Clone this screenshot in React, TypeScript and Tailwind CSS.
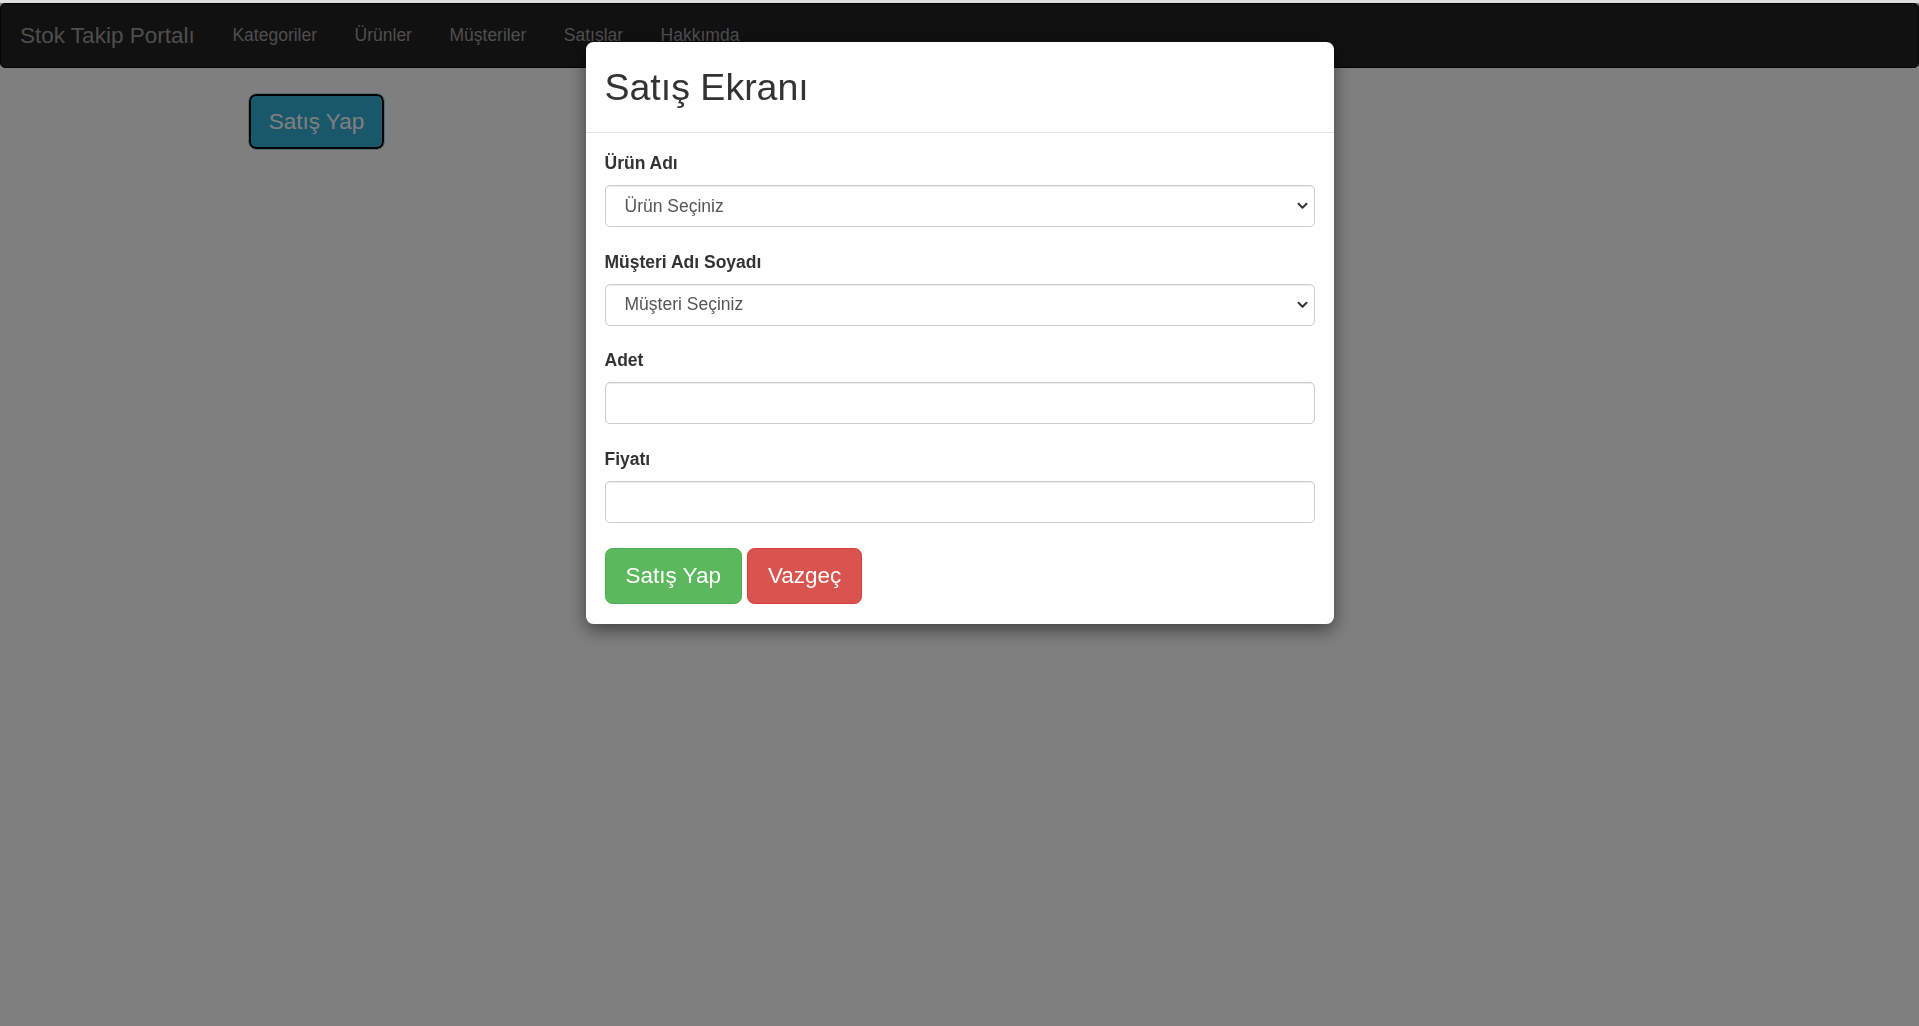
import React from 'react';

const navLinks = ['Kategoriler', 'Ürünler', 'Müşteriler', 'Satışlar', 'Hakkımda'];

const Chevron: React.FC = () => (
  <svg
    className="pointer-events-none absolute right-[7px] top-1/2 -translate-y-1/2"
    width="11"
    height="8"
    viewBox="0 0 11 8"
    fill="none"
  >
    <path d="M1.5 1.8 L5.5 5.8 L9.5 1.8" stroke="#333" strokeWidth="2" strokeLinecap="round" strokeLinejoin="round" />
  </svg>
);

const FormGroup: React.FC<{ label: string; children: React.ReactNode }> = ({ label, children }) => (
  <div className="mb-[22.5px]">
    <label className="block h-[25px] leading-[25px] mb-[9px] text-[17.5px] font-bold text-[#333]">{label}</label>
    {children}
  </div>
);

const inputCls =
  'block w-full h-[42px] rounded-[5px] border border-[#ccc] bg-white text-[17.5px] text-[#555] shadow-[inset_0_1px_1px_rgba(0,0,0,0.075)] outline-none';

const App: React.FC = () => {
  return (
    <div className="relative min-h-screen bg-white font-['Liberation_Sans',Arial,sans-serif]">
      {/* Page */}
      <div className="pt-[3px]">
        <nav className="flex h-[65px] items-center rounded-[5px] border border-[#080808] bg-[#222]">
          <span className="px-[19px] text-[22.5px] text-[#9d9d9d]">Stok Takip Portalı</span>
          <ul className="flex">
            {navLinks.map((l) => (
              <li key={l} className="px-[18.75px] text-[17.5px] text-[#9d9d9d]">
                {l}
              </li>
            ))}
          </ul>
        </nav>
        <div className="pl-[249px] pt-[26px]">
          <button className="h-[55px] w-[135px] rounded-[7px] border-2 border-black bg-[#31b0d5] text-[22.5px] text-white outline outline-1 outline-offset-0 outline-[#a9dbe8]">
            Satış Yap
          </button>
        </div>
      </div>

      {/* Backdrop */}
      <div className="fixed inset-0 bg-black/50" />
      <div className="fixed left-0 right-0 top-0 h-[3px] bg-[#dedede]" />

      {/* Modal */}
      <div className="fixed inset-0 flex justify-center">
        <div className="mt-[42px] h-fit w-[748px] rounded-[7.5px] bg-white shadow-[0_6px_18px_rgba(0,0,0,0.5)]">
          <div className="h-[91px] border-b border-[#e5e5e5] px-[19px] pt-[18.75px]">
            <h2 className="text-[37.5px] leading-[53.6px] text-[#333]">Satış Ekranı</h2>
          </div>
          <div className="px-[19px] pt-[18px] pb-[20px]">
            <FormGroup label="Ürün Adı">
              <div className="relative">
                <select className={`${inputCls} appearance-none pl-[19px]`} defaultValue="">
                  <option value="">Ürün Seçiniz</option>
                </select>
                <Chevron />
              </div>
            </FormGroup>
            <FormGroup label="Müşteri Adı Soyadı">
              <div className="relative">
                <select className={`${inputCls} appearance-none pl-[19px]`} defaultValue="">
                  <option value="">Müşteri Seçiniz</option>
                </select>
                <Chevron />
              </div>
            </FormGroup>
            <FormGroup label="Adet">
              <input type="text" className={`${inputCls} px-[15px]`} />
            </FormGroup>
            <FormGroup label="Fiyatı">
              <input type="text" className={`${inputCls} px-[15px]`} />
            </FormGroup>
            <div className="mt-[25px] flex gap-[5px]">
              <button className="h-[56px] rounded-[7.5px] border border-[#4cae4c] bg-[#5cb85c] px-[20px] text-[22.5px] text-white">
                Satış Yap
              </button>
              <button className="h-[56px] rounded-[7.5px] border border-[#d43f3a] bg-[#d9534f] px-[20px] text-[22.5px] text-white">
                Vazgeç
              </button>
            </div>
          </div>
        </div>
      </div>
    </div>
  );
};

export default App;
